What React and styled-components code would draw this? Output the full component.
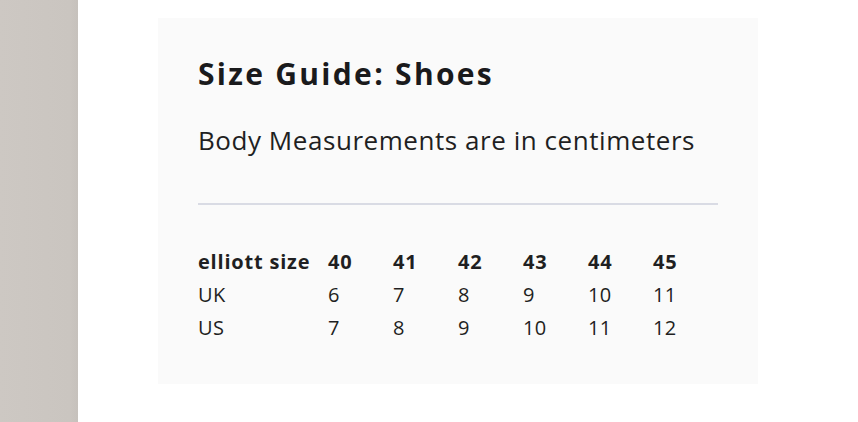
import React from "react";
import styled, { createGlobalStyle } from "styled-components";

const GlobalStyle = createGlobalStyle`
  html, body {
    margin: 0;
    padding: 0;
    background: #ffffff;
  }
  body {
    font-family: "Open Sans", "DejaVu Sans", sans-serif;
    color: #1d1d1f;
  }
`;

const Page = styled.div`
  display: flex;
  height: 422px;
  overflow: hidden;
`;

const SideImage = styled.div`
  width: 78px;
  flex-shrink: 0;
  background: linear-gradient(90deg, #cdc8c3 0%, #cac5c0 90%, #c6c1bc 100%);
`;

const Main = styled.div`
  flex: 1;
  padding: 18px 0 0 80px;
`;

const Panel = styled.section`
  width: 600px;
  height: 366px;
  box-sizing: border-box;
  background: #fafafa;
  padding: 36px 40px 0;
`;

const Title = styled.h2`
  margin: 0;
  font-size: 30px;
  font-weight: 700;
  letter-spacing: 2.3px;
  line-height: 40px;
  color: #1a1a1c;
`;

const Lead = styled.p`
  margin: 29px 0 0;
  font-size: 26px;
  line-height: 34px;
  color: #1f1f22;
  letter-spacing: 0.55px;
`;

const Divider = styled.hr`
  margin: 46px 0 0;
  border: 0;
  border-top: 2px solid #d9dbe4;
`;

const Table = styled.div`
  margin-top: 40px;
  display: grid;
  grid-template-columns: 130px repeat(6, 65px);
  grid-auto-rows: 33px;
  align-items: center;
  font-size: 20px;
`;

const Cell = styled.div`
  font-weight: ${(p) => (p.$head ? 700 : 400)};
  color: #1f1f22;
  letter-spacing: ${(p) => (p.$head ? "0.8px" : "0.3px")};
  white-space: nowrap;
`;

const rows = [
  ["elliott size", "40", "41", "42", "43", "44", "45"],
  ["UK", "6", "7", "8", "9", "10", "11"],
  ["US", "7", "8", "9", "10", "11", "12"],
];

export default function App() {
  return (
    <>
      <GlobalStyle />
      <Page>
        <SideImage />
        <Main>
          <Panel>
            <Title>Size Guide: Shoes</Title>
            <Lead>Body Measurements are in centimeters</Lead>
            <Divider />
            <Table>
              {rows.map((row, i) =>
                row.map((c, j) => (
                  <Cell key={`${i}-${j}`} $head={i === 0}>
                    {c}
                  </Cell>
                ))
              )}
            </Table>
          </Panel>
        </Main>
      </Page>
    </>
  );
}
